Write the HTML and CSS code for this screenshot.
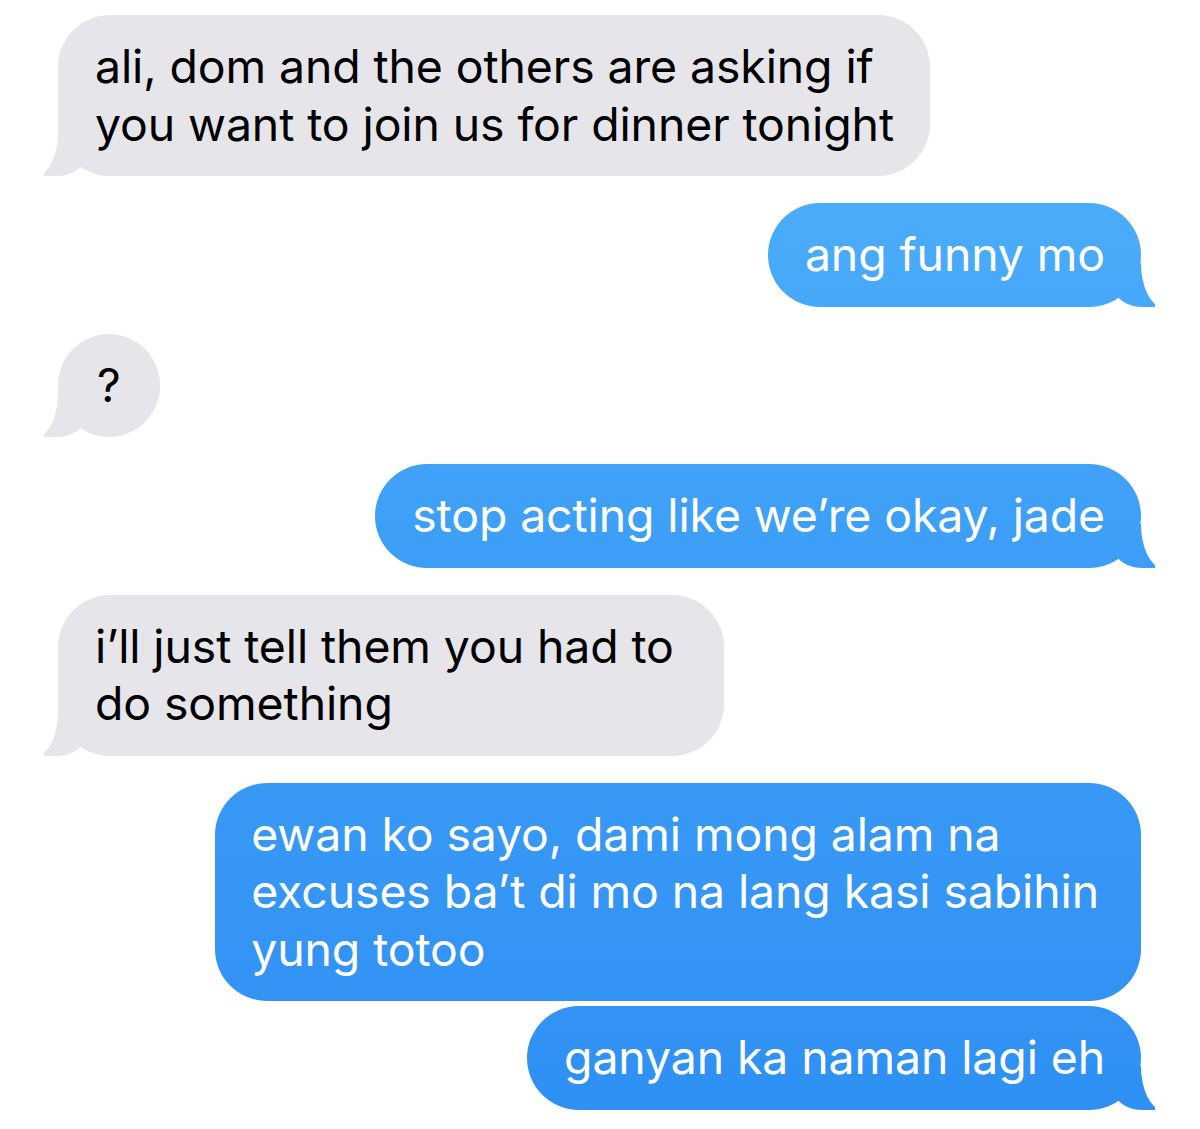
FILE: index.html
```html
<!DOCTYPE html>
<html lang="tl">
<head>
  <meta charset="UTF-8" />
  <title>Messages</title>
  <link rel="stylesheet" href="styles.css">
</head>
<body>
  <div class="thread">
    <div class="msg them tail">ali, dom and the others are asking if<br>you want to join us for dinner tonight</div>
    <div class="msg me tail">ang funny mo</div>
    <div class="msg them tail short">?</div>
    <div class="msg me tail">stop acting like we’re okay, jade</div>
    <div class="msg them tail wide">i’ll just tell them you had to<br>do something</div>
    <div class="msg me long">ewan ko sayo, dami mong alam na<br>excuses ba’t di mo na lang kasi sabihin<br>yung totoo</div>
    <div class="msg me tail joined">ganyan ka naman lagi eh</div>
  </div>
</body>
</html>
```

FILE: styles.css
```css
body {
  margin: 0;
  background: #fff;
  font-family: Inter, 'Noto Sans', sans-serif;
}
.thread {
  display: flex;
  flex-direction: column;
  gap: 27px;
  padding: 15px 59px 18px 58px;
}
.msg {
  position: relative;
  font-size: 46.4px;
  line-height: 57.5px;
  letter-spacing: -0.1px;
  padding: 23px 36px 23px 37px;
  border-radius: 52px;
  white-space: nowrap;
}
.them {
  align-self: flex-start;
  background: #e5e5ea;
  color: #000;
}
.me {
  align-self: flex-end;
  color: #fff;
  background: linear-gradient(#52b4fb 0px, #3d9ef7 560px, #2f90f4 1129px);
  background-attachment: fixed;
}
.joined {
  margin-top: -22px;
}
.short {
  padding-left: 39px;
  padding-right: 39px;
}
.wide {
  padding-right: 50px;
}
.long {
  padding-left: 36px;
  padding-right: 42px;
}

/* tails */
.tail::before,
.tail::after {
  content: "";
  position: absolute;
  bottom: 0;
  height: 44px;
}
.them.tail::before {
  left: -14px;
  width: 40px;
  background: #e5e5ea;
  border-bottom-right-radius: 28px 18px;
}
.them.tail::after {
  left: -40px;
  width: 40px;
  background: #fff;
  border-bottom-right-radius: 22px 44px;
}
.me.tail::before {
  right: -14px;
  width: 40px;
  background: linear-gradient(#52b4fb 0px, #3d9ef7 560px, #2f90f4 1129px);
  background-attachment: fixed;
  border-bottom-left-radius: 28px 18px;
}
.me.tail::after {
  right: -40px;
  width: 40px;
  background: #fff;
  border-bottom-left-radius: 22px 44px;
}
```
